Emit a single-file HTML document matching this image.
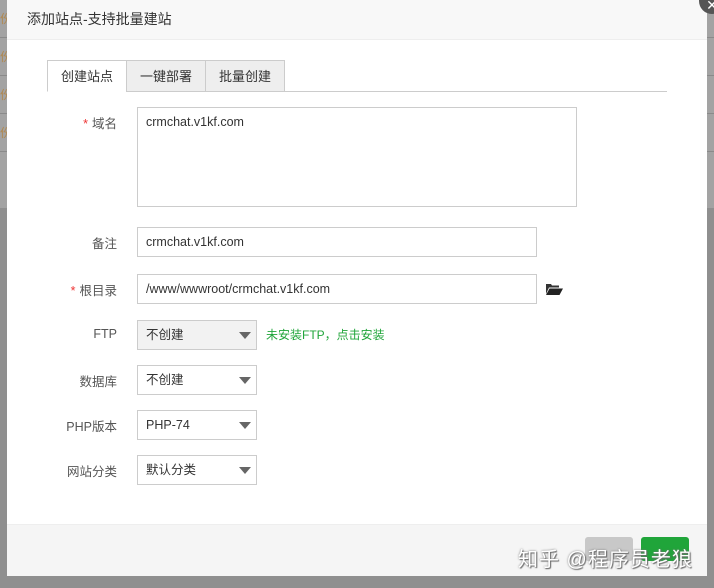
<!DOCTYPE html>
<html><head><meta charset="utf-8"><style>
*{margin:0;padding:0;box-sizing:border-box}
body{width:714px;height:588px;background:#8f8f8f;position:relative;overflow:hidden;font-family:"Liberation Sans","Noto Sans CJK SC",sans-serif;font-size:12px;color:#333}
.strip{position:absolute;top:0;height:208px;background:#a3a3a3}
.strip div{height:38px;border-bottom:1px solid #8a8a8a;color:#b08850;font-size:12px;line-height:38px}
.dlg{position:absolute;left:7px;top:0;width:700px;height:576px;background:#fff}
.hd{height:40px;background:#f8f8f8;border-bottom:1px solid #eee;padding-left:20px;line-height:38px;font-size:14px;color:#333}
.close{position:absolute;left:692px;top:-12px;width:26px;height:26px;border-radius:50%;background:#555;color:#fff;text-align:center;line-height:34px;font-size:14px}
.tabs{position:absolute;left:40px;top:60px;width:620px;height:32px;border-bottom:1px solid #ccc}
.tab{position:absolute;top:0;height:32px;line-height:32px;text-align:center;font-size:13px;border:1px solid #ccc;background:#eee}
.lbl{position:absolute;width:110px;text-align:right;font-size:12.5px;color:#555}
.lbl b{color:#e33;font-weight:normal;margin-right:4px}
.inp{position:absolute;left:130px;border:1px solid #ccc;padding:0 8px;font-size:12.5px;color:#333}
.sel{position:absolute;left:130px;width:120px;height:30px;border:1px solid #ccc;line-height:28px;padding-left:8px;font-size:12.5px}
.sel:after{content:"";position:absolute;right:5px;top:11px;border-left:6px solid transparent;border-right:6px solid transparent;border-top:7px solid #666}
.ft{position:absolute;left:0;top:524px;width:700px;height:52px;background:#f5f5f5;border-top:1px solid #eee}
.btn{position:absolute;top:12px;width:48px;height:24px;border-radius:3px}
.wm{position:absolute;left:518px;top:543px;font-size:20px;color:#fff;text-shadow:0 0 2px #777,1px 1px 1px #666;letter-spacing:1px}
</style></head><body>
<div class="strip" style="left:0;width:7px"><div>份</div><div>份</div><div>份</div><div>份</div></div>
<div class="strip" style="left:707px;width:7px"><div></div><div></div><div></div><div></div></div>
<div class="dlg">
<div class="hd">添加站点-支持批量建站</div>
<div class="tabs">
<div class="tab" style="left:0;width:80px;background:#fff;border-bottom-color:#fff">创建站点</div>
<div class="tab" style="left:79px;width:80px">一键部署</div>
<div class="tab" style="left:158px;width:80px">批量创建</div>
</div>
<div class="lbl" style="top:113px"><b>*</b>域名</div>
<div class="inp" style="top:107px;width:440px;height:100px;padding-top:7px">crmchat.v1kf.com</div>
<div class="lbl" style="top:233px">备注</div>
<div class="inp" style="top:227px;width:400px;height:30px;line-height:28px">crmchat.v1kf.com</div>
<div class="lbl" style="top:280px"><b>*</b>根目录</div>
<div class="inp" style="top:274px;width:400px;height:30px;line-height:28px">/www/wwwroot/crmchat.v1kf.com</div>
<svg style="position:absolute;left:539px;top:283px" width="17" height="12" viewBox="0 0 17 12"><path d="M0 1h5l1 1.5h7v2H3L0 11z" fill="#333"/><path d="M3.5 5.5H17L13.5 12H0z" fill="#222"/></svg>
<div class="lbl" style="top:327px">FTP</div>
<div class="sel" style="top:320px;background:#f2f2f2">不创建</div>
<div style="position:absolute;left:259px;top:326px;color:#20a53a;font-size:12px">未安装FTP，点击安装</div>
<div class="lbl" style="top:371px">数据库</div>
<div class="sel" style="top:365px">不创建</div>
<div class="lbl" style="top:416px">PHP版本</div>
<div class="sel" style="top:410px">PHP-74</div>
<div class="lbl" style="top:461px">网站分类</div>
<div class="sel" style="top:455px">默认分类</div>
<div class="ft">
<div class="btn" style="left:578px;background:#c8c8c8"></div>
<div class="btn" style="left:634px;background:#20a53a"></div>
</div>
<div class="close">✕</div>
</div>
<div class="wm">知乎 @程序员老狼</div>
</body></html>
